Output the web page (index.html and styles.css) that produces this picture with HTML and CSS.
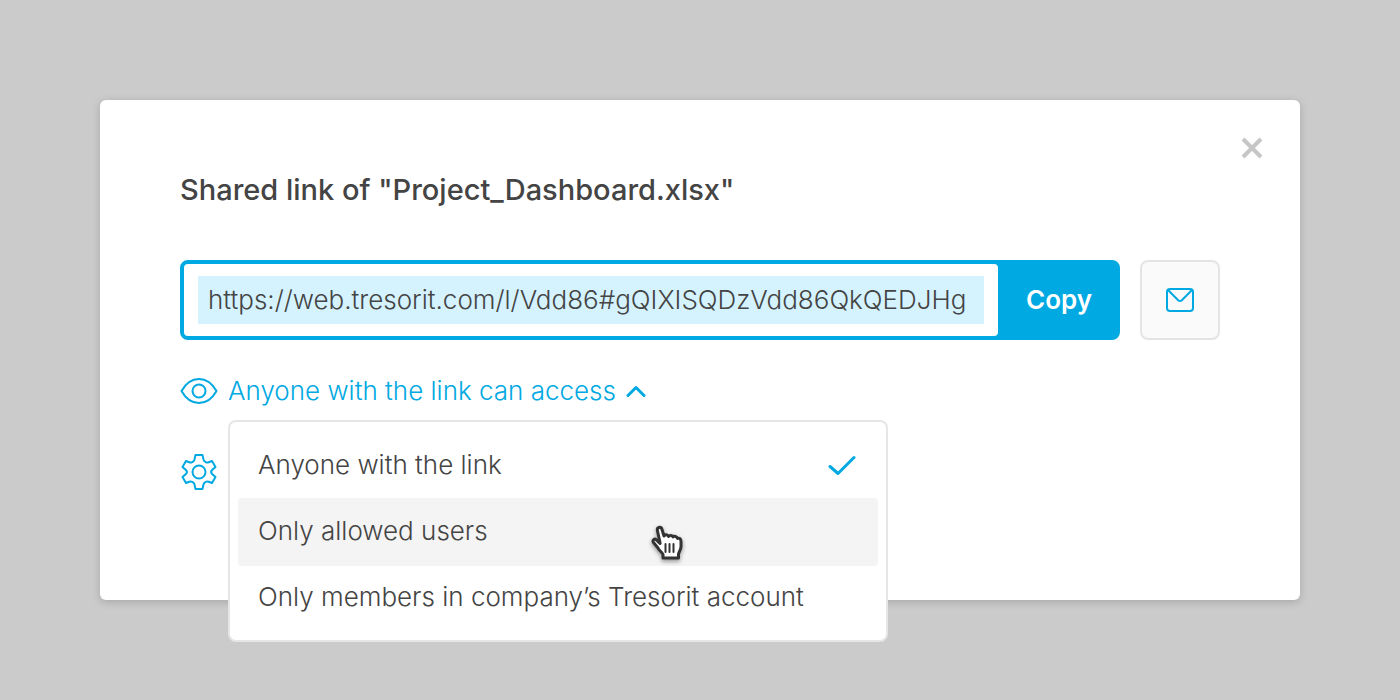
FILE: index.html
```html
<!DOCTYPE html>
<html lang="en">
  <head>
    <meta charset="utf-8">
    <title>Shared link</title>
    <link rel="stylesheet" href="styles.css">
  </head>
  <body>

    <main class="dialog" role="dialog" aria-labelledby="dialog-title">
      <button class="close" type="button" aria-label="Close">
        <svg width="22" height="22" viewBox="0 0 22 22"><path d="M2 2l18 18M20 2L2 20"/></svg>
      </button>

      <h1 class="title" id="dialog-title">Shared link of "Project_Dashboard.xlsx"</h1>

      <div class="link-row">
        <div class="link-box">
          <input class="link-input" type="text" aria-label="Shared link" readonly value="https://web.tresorit.com/l/Vdd86#gQIXISQDzVdd86QkQEDJHg">
          <button class="copy" type="button">Copy</button>
        </div>
        <button class="mail" type="button" aria-label="Send by email">
          <svg width="30" height="26" viewBox="0 0 30 26"><rect x="2" y="2" width="26" height="22" rx="3"/><path d="M3 3l10.200 10.200q1.800 1.600 3.600 0L27 3"/></svg>
        </button>
      </div>

      <div class="access">
        <button class="access-toggle" type="button" aria-haspopup="menu" aria-expanded="true">
          <svg class="eye" width="38" height="28" viewBox="0 0 38 28"><path d="M1.500 14C6 6 12 2 19 2s13 4 17.500 12C32 22 26 26 19 26S6 22 1.500 14z"/><circle cx="19" cy="14" r="6.500"/></svg>
          <span>Anyone with the link can access</span>
          <svg class="chevron" width="20" height="14" viewBox="0 0 20 14"><path d="M2 11.500l8-8 8 8"/></svg>
        </button>

        <div class="menu" role="menu">
          <button class="item" type="button" role="menuitemradio" aria-checked="true">
            <span>Anyone with the link</span>
            <svg class="check" width="28" height="20" viewBox="0 0 28 20"><path d="M2 11.500l8 7L26 2.500"/></svg>
          </button>
          <button class="item hover" type="button" role="menuitemradio" aria-checked="false">
            <span>Only allowed users</span>
            <svg class="cursor" width="34" height="38" viewBox="0 0 34 38"><path class="hand" d="M9 18.500L6.500 7C5.500 3 10 2 11 5.500l2 6.500c1-2 4-1.500 4.500.5 1-1.500 4-1.500 4.500.5 1-1.500 4-.5 4.500 1.500 2-1 3.500.5 3.500 3v5c0 3-2 5-2.500 7.500V34H12v-3.500c-1-2.500-4-4-5-6.500L2.500 18.500c-1.500-2.500 1-4.500 3-2.500L9 19.500"/><path class="lines" d="M14.500 20v8M18.500 20v8M22.500 20v8"/></svg>
          </button>
          <button class="item" type="button" role="menuitemradio" aria-checked="false">
            <span>Only members in company’s Tresorit account</span>
          </button>
        </div>
      </div>

      <button class="settings" type="button" aria-label="Link settings">
        <svg width="38" height="38" viewBox="0 0 38 38"><path d="M15.500 2h7l1 4.500q.5 1.800 2.200 2.600 1.500.8 3 .2L32 8l3.500 6-3.400 3q-2 2 0 4l3.400 3-3.500 6-3.300-1.300q-1.500-.6-3 .2-1.700.8-2.200 2.600l-1 4.500h-7l-1-4.500q-.5-1.800-2.200-2.600-1.500-.8-3-.2L6 30l-3.500-6 3.400-3q2-2 0-4L2.500 14 6 8l3.300 1.300q1.500.6 3-.2 1.700-.8 2.200-2.600z"/><circle cx="19" cy="19" r="6.500"/></svg>
      </button>
    </main>

  </body>
</html>
```

FILE: styles.css
```css
* {
  box-sizing: border-box;
}

body {
  margin: 0;
  padding: 100px;
  background: #cbcbcb;
  color: #444;
  font-family: Inter, "Open Sans", sans-serif;
  font-size: 26px;
  font-weight: 350;
  line-height: 40px;
}

button,
input {
  margin: 0;
  padding: 0;
  border: 0;
  background: none;
  color: inherit;
  font: inherit;
}

button {
  cursor: pointer;
}

svg {
  display: block;
  flex: none;
  fill: none;
  stroke: #00a9e2;
  stroke-width: 2;
  stroke-linecap: round;
  stroke-linejoin: round;
}

.dialog {
  position: relative;
  min-height: 500px;
  padding: 70px 80px;
  border-radius: 6px;
  background: #fff;
  box-shadow: 0 2px 8px rgba(0, 0, 0, 0.18);
}

.close {
  position: absolute;
  top: 37px;
  right: 37px;
}

.close svg {
  stroke: #c6c6c6;
  stroke-width: 4;
  stroke-linecap: butt;
}

.title {
  margin: 0 0 50px;
  font-size: 29px;
  font-weight: 550;
  line-height: 40px;
}

.link-row {
  display: flex;
  gap: 20px;
}

.link-box {
  display: flex;
  flex: 1;
  height: 80px;
  border: 4px solid #00a9e2;
  border-radius: 8px;
  background: #00a9e2;
}

.link-input {
  flex: 1;
  min-width: 0;
  padding: 0 10px;
  border: solid #fff;
  border-width: 12px 14px;
  border-radius: 4px;
  background: #d4f3ff;
  outline: none;
}

.copy {
  width: 118px;
  padding-left: 4px;
  color: #fff;
  font-weight: 600;
}

.mail {
  display: flex;
  align-items: center;
  justify-content: center;
  width: 80px;
  height: 80px;
  border: 2px solid #e4e4e4;
  border-radius: 8px;
  background: #fafafa;
}

.access {
  position: relative;
  margin-top: 31px;
}

.access-toggle {
  display: flex;
  align-items: center;
  gap: 10px;
  color: #00a9e2;
}

.chevron {
  stroke-width: 3;
}

.menu {
  position: absolute;
  z-index: 1;
  top: 49px;
  left: 48px;
  width: 660px;
  padding: 10px 8px;
  border: 2px solid #e6e6e6;
  border-radius: 8px;
  background: #fff;
}

.item {
  position: relative;
  display: flex;
  align-items: center;
  justify-content: space-between;
  width: 100%;
  height: 66px;
  padding: 0 22px 0 20px;
  border-radius: 4px;
}

.hover {
  height: 68px;
  margin-bottom: -2px;
  padding-bottom: 2px;
  background: #f4f4f4;
}

.check {
  stroke-width: 3;
}

.cursor {
  position: absolute;
  top: 26px;
  left: 413px;
  filter: drop-shadow(0 2px 2px rgba(0, 0, 0, 0.4));
}

.hand {
  fill: #fff;
  stroke: #333;
  stroke-width: 3;
}

.lines {
  stroke: #333;
}

.settings {
  display: block;
  margin-top: 42px;
}
```
